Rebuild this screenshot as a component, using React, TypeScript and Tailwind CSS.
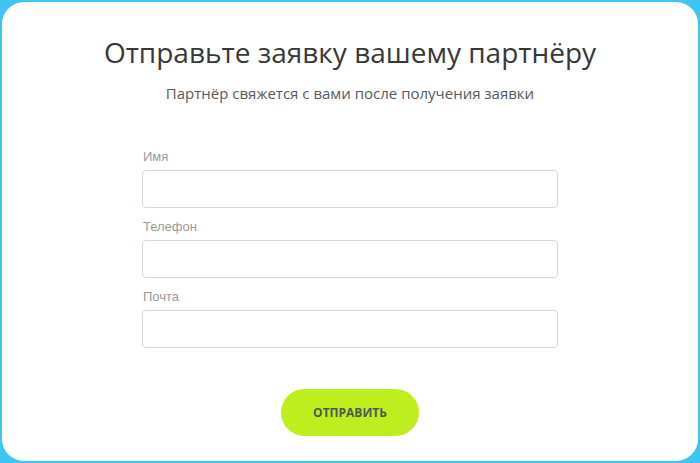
import React from "react";

export default function App() {
  const fields = ["Имя", "Телефон", "Почта"];
  return (
    <div className="w-[700px] h-[463px] bg-[#3ec6f0] p-[2px]">
      <div className="w-full h-full bg-white rounded-[22px] flex flex-col items-center pt-[31px]">
        <h1 className="text-[28px] leading-[38px] text-[#383838] font-normal" style={{ fontFamily: '"Open Sans", sans-serif' }}>
          Отправьте заявку вашему партнёру
        </h1>
        <p className="mt-[12px] text-[15px] leading-[21px] text-[#555a60]" style={{ fontFamily: '"Open Sans", sans-serif' }}>
          Партнёр свяжется с вами после получения заявки
        </p>
        <form className="mt-[45px] w-[416px] flex flex-col gap-[11px]" onSubmit={(e) => e.preventDefault()}>
          {fields.map((f) => (
            <label key={f} className="flex flex-col">
              <span className="text-[13px] leading-[16px] text-[#9a9a9a] ml-[1px]" style={{ fontFamily: '"Liberation Sans", Arial, sans-serif' }}>
                {f}
              </span>
              <input
                type="text"
                className="mt-[5px] h-[38px] w-full rounded-[4px] border border-[#d3d8e0] bg-white outline-none"
              />
            </label>
          ))}
        </form>
        <button
          type="button"
          className="mt-[41px] w-[138px] h-[47px] rounded-full bg-[#bfee1e] text-[12px] font-bold text-[#4d5856]"
          style={{ fontFamily: '"Open Sans", sans-serif' }}
        >
          ОТПРАВИТЬ
        </button>
      </div>
    </div>
  );
}
